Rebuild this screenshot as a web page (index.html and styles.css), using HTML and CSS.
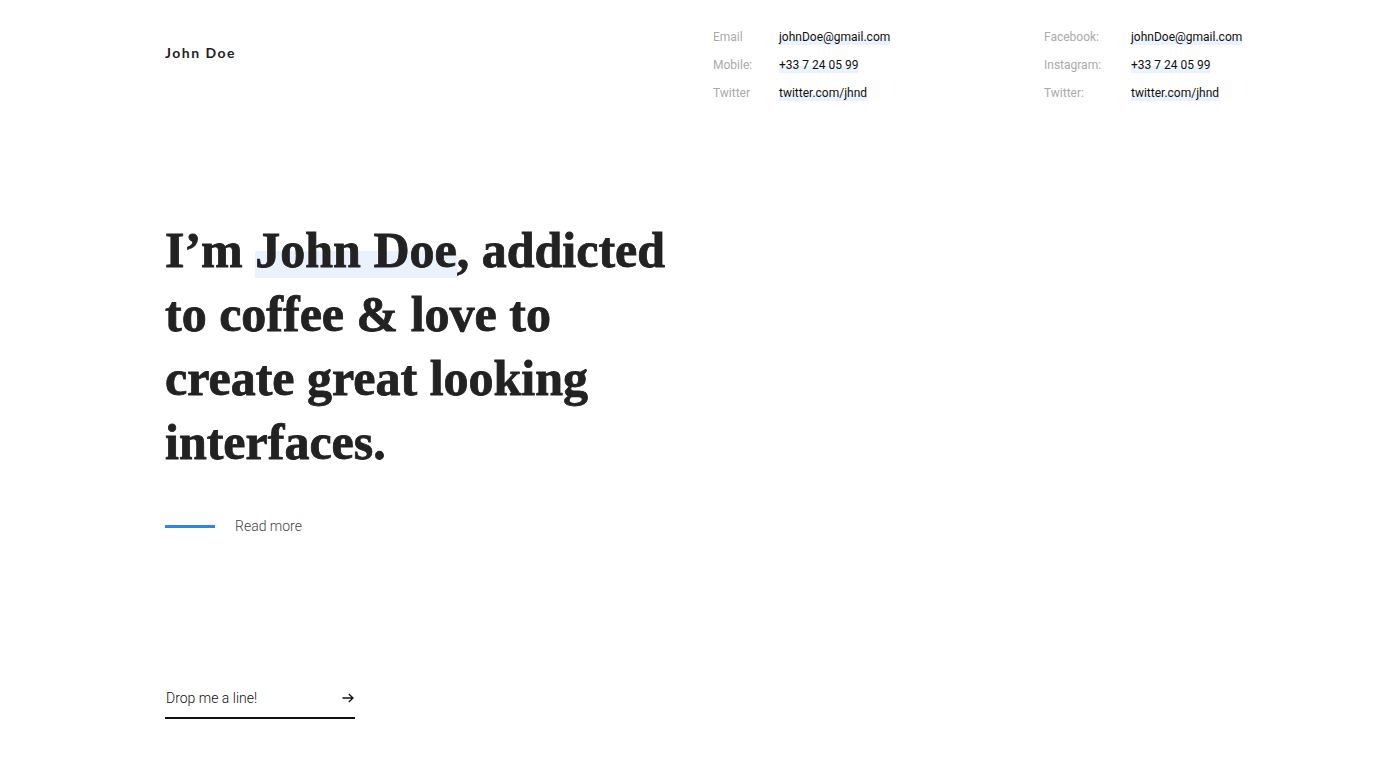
FILE: index.html
```html
<!DOCTYPE html>
<html lang="en">
<head>
<meta charset="utf-8">
<title>John Doe</title>
<link rel="stylesheet" href="styles.css">
</head>
<body>
<div class="page">
  <header class="header">
    <div class="logo">John Doe</div>
    <div class="contacts">
      <dl class="contact-col col-a">
        <div class="row"><dt>Email</dt><dd><a href="#">johnDoe@gmail.com</a></dd></div>
        <div class="row"><dt>Mobile:</dt><dd><a href="#">+33 7 24 05 99</a></dd></div>
        <div class="row"><dt>Twitter</dt><dd><a href="#">twitter.com/jhnd</a></dd></div>
      </dl>
      <dl class="contact-col col-b">
        <div class="row"><dt>Facebook:</dt><dd><a href="#">johnDoe@gmail.com</a></dd></div>
        <div class="row"><dt>Instagram:</dt><dd><a href="#">+33 7 24 05 99</a></dd></div>
        <div class="row"><dt>Twitter:</dt><dd><a href="#">twitter.com/jhnd</a></dd></div>
      </dl>
    </div>
  </header>

  <main class="hero">
    <h1 class="headline">I’m <span class="mark">John Doe</span>, addicted<br>to coffee &amp; love to<br>create great looking<br>interfaces.</h1>
    <a class="read-more" href="#"><span class="read-line"></span><span>Read more</span></a>
  </main>

  <footer class="footer">
    <a class="drop-line" href="#">
      <span>Drop me a line!</span>
      <svg class="arrow" width="12" height="10" viewBox="0 0 12 10" aria-hidden="true"><path d="M0.5 5H11M6.8 1L11 5L6.8 9" fill="none" stroke="#111" stroke-width="1.3"/></svg>
    </a>
  </footer>
</div>
</body>
</html>
```
FILE: styles.css
```css
* { box-sizing: border-box; }
html, body { margin: 0; padding: 0; background: #fff; }
body {
  font-family: Roboto, "Liberation Sans", sans-serif;
  color: #222;
  width: 1400px;
  height: 768px;
  overflow: hidden;
}
a { color: inherit; text-decoration: none; }

.page {
  padding: 23px 0 0 165px;
  display: flex;
  flex-direction: column;
}

.header {
  display: flex;
  align-items: flex-start;
}
.logo {
  font-family: Lato, "Open Sans", sans-serif;
  font-weight: 700;
  font-size: 14px;
  letter-spacing: 1.5px;
  color: #222;
  width: 548px;
  margin-top: 21px;
}
.contacts {
  display: flex;
}
.contact-col { margin: 0; }
.col-a { width: 331px; }
.col-a dt { width: 66px; }
.col-b dt { width: 87px; }
.row {
  display: flex;
  height: 28px;
  align-items: center;
  font-size: 12px;
}
dt { color: #aaa; }
dd { margin: 0; }
dd a {
  color: #111;
  background: linear-gradient(to bottom, transparent 55%, #eaf2fd 55%);
  padding-bottom: 1px;
}

.hero {
  margin-top: 111px;
}
.headline {
  margin: 0;
  font-family: "Liberation Serif", serif;
  font-weight: 700;
  font-size: 50px;
  line-height: 64px;
  color: #222;
  -webkit-text-stroke: 0.8px #222;
}
.mark {
  background: linear-gradient(to bottom, transparent 52%, #eaf2fd 52%);
}
.read-more {
  display: flex;
  align-items: center;
  margin-top: 44px;
  font-size: 14px;
  font-weight: 300;
  color: #444;
}
.read-line {
  width: 50px;
  height: 3px;
  background: #2a87e4;
  margin-right: 20px;
}

.footer {
  margin-top: 156px;
}
.drop-line {
  display: flex;
  align-items: center;
  justify-content: space-between;
  width: 190px;
  padding: 0 1px 11px 1px;
  border-bottom: 2px solid #111;
  font-size: 14px;
  font-weight: 300;
  color: #111;
}
.arrow { display: block; }
```
